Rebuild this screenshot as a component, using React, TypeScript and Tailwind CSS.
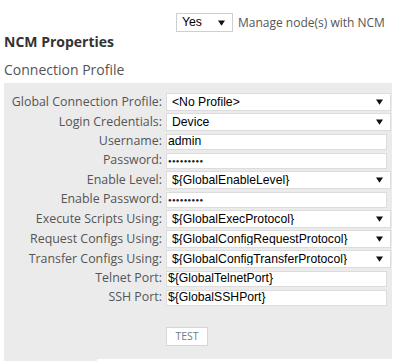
import React from "react";

const sans = { fontFamily: '"Open Sans", "Noto Sans", sans-serif' };
const arial = { fontFamily: '"Liberation Sans", Arial, sans-serif' };

function Arrow() {
  return (
    <svg width="7" height="6" viewBox="0 0 7 6" className="shrink-0">
      <path d="M0 0.5 H7 L3.5 5.8 Z" fill="#111" />
    </svg>
  );
}

function Select({ value }: { value: string }) {
  return (
    <div
      className="w-[225px] h-[18px] bg-white border border-[#dcdcdc] flex items-center pl-[5px] pr-[7px] text-[12.2px] text-black leading-none"
      style={arial}
    >
      <span className="flex-1 truncate">{value}</span>
      <Arrow />
    </div>
  );
}

function Input({ value, password }: { value: string; password?: boolean }) {
  return (
    <div
      className="w-[221px] h-[16px] bg-white border border-[#dcdcdc] flex items-center pl-[1px] text-[12.2px] text-black leading-none"
      style={arial}
    >
      {password ? (
        <span className="text-[6px] tracking-[0.3px] text-[#222]">●●●●●●●●●</span>
      ) : (
        <span>{value}</span>
      )}
    </div>
  );
}

type Row = { label: string; kind: "select" | "input" | "password"; value: string };

const rows: Row[] = [
  { label: "Global Connection Profile:", kind: "select", value: "<No Profile>" },
  { label: "Login Credentials:", kind: "select", value: "Device" },
  { label: "Username:", kind: "input", value: "admin" },
  { label: "Password:", kind: "password", value: "" },
  { label: "Enable Level:", kind: "select", value: "${GlobalEnableLevel}" },
  { label: "Enable Password:", kind: "password", value: "" },
  { label: "Execute Scripts Using:", kind: "select", value: "${GlobalExecProtocol}" },
  { label: "Request Configs Using:", kind: "select", value: "${GlobalConfigRequestProtocol}" },
  { label: "Transfer Configs Using:", kind: "select", value: "${GlobalConfigTransferProtocol}" },
  { label: "Telnet Port:", kind: "input", value: "${GlobalTelnetPort}" },
  { label: "SSH Port:", kind: "input", value: "${GlobalSSHPort}" },
];

export default function App() {
  return (
    <div className="w-[393px] h-[361px] bg-white overflow-hidden" style={sans}>
      <div className="flex items-center pt-[13px] pl-[176px] h-[32px]">
        <div
          className="w-[57px] h-[19px] border border-[#cfcfcf] bg-white flex items-center pl-[5px] pr-[7px] text-[12.2px] text-black leading-none"
          style={arial}
        >
          <span className="flex-1">Yes</span>
          <Arrow />
        </div>
        <span className="ml-[5px] text-[12px] text-[#555] leading-none whitespace-nowrap">Manage node(s) with NCM</span>
      </div>
      <div className="pl-[4px] mt-[1px] text-[14px] font-bold text-[#333] leading-[18px]">NCM Properties</div>
      <div className="pl-[4px] mt-[10px] text-[14px] text-[#555] leading-[18px]">Connection Profile</div>
      <div className="ml-[4px] w-[388px] mt-[4px] bg-[#ebebec] pt-[9px] pb-[13px]">
        {rows.map((r) => (
          <div key={r.label} className={`flex items-center ${r.kind === "select" ? "h-[20px]" : "h-[19px]"}`}>
            <div className="w-[158px] text-right text-[12.4px] text-[#555] leading-none whitespace-nowrap">{r.label}</div>
            <div className="ml-[4px]">
              {r.kind === "select" ? (
                <Select value={r.value} />
              ) : (
                <Input value={r.value} password={r.kind === "password"} />
              )}
            </div>
          </div>
        ))}
        <div className="mt-[20px] ml-[162px]">
          <div className="w-[42px] h-[19px] bg-white border border-[#d6d6d6] flex items-center justify-center text-[10.5px] text-[#6b7c8d] leading-none">
            TEST
          </div>
        </div>
      </div>
      <div className="ml-[4px] w-[93px] h-[4px] bg-[#ebebec]" />
    </div>
  );
}
